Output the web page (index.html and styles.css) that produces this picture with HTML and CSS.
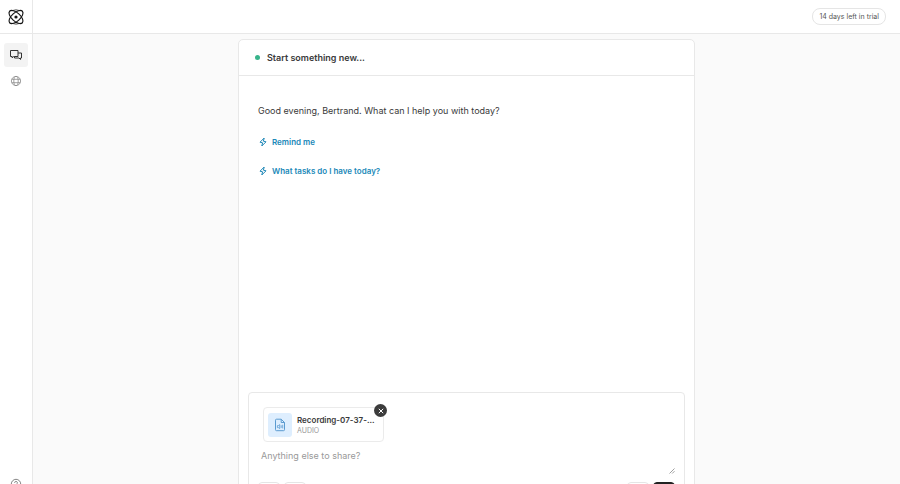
FILE: index.html
```html
<!DOCTYPE html>
<html lang="en">
<head>
  <meta charset="UTF-8">
  <title>Start something new...</title>
  <meta name="viewport" content="width=device-width, initial-scale=1">
  <link rel="stylesheet" href="styles.css">
</head>
<body>
  <div class="app">
    <nav class="sidebar" aria-label="Main">
      <a class="logo" href="#" aria-label="Home">
        <svg viewBox="0 0 18 18" width="18" height="18" fill="none" stroke="#161616" stroke-width="1.2">
          <ellipse cx="9" cy="9" rx="8.600" ry="4.200" transform="rotate(42 9 9)"/>
          <ellipse cx="9" cy="9" rx="8.600" ry="4.200" transform="rotate(-42 9 9)"/>
          <path d="M4.500 2.800Q9 .8 13.500 2.800M4.500 15.200q4.500 2 9 0" stroke-width=".7"/>
          <circle cx="9" cy="9" r="1.600" fill="#161616" stroke="none"/>
        </svg>
      </a>
      <div class="nav-links">
        <a class="nav-item active" href="#" aria-label="Chats">
          <svg viewBox="0 0 14 12" width="14" height="12" fill="none" stroke="#333" stroke-width="1">
            <path d="M5.500 7.500H4.600L3.200 9V7.500H1.500v-6h7.500v2.500"/>
            <path d="M9 4h3.500v5h-1v1.500L10 9H5.500V7.500H9z"/>
          </svg>
        </a>
        <a class="nav-item" href="#" aria-label="Explore">
          <svg viewBox="0 0 12 12" width="12" height="12" fill="none" stroke="#8a8a8a" stroke-width=".8">
            <circle cx="6" cy="6" r="4.600"/>
            <ellipse cx="6" cy="6" rx="2.200" ry="4.600"/>
            <path d="M1.800 4.300h8.400M1.800 7.700h8.400"/>
          </svg>
        </a>
      </div>
      <a class="nav-item help" href="#" aria-label="Help">
        <svg viewBox="0 0 12 12" width="12" height="12" fill="none" stroke="#777" stroke-width=".9">
          <circle cx="6" cy="6" r="4.700"/>
          <path d="M4.600 4.800a1.400 1.400 0 1 1 2 1.300q-.6.300-.6.900M6 8.200v.7"/>
        </svg>
      </a>
    </nav>

    <div class="page">
      <header class="topbar">
        <a class="trial" href="#">14 days left in trial</a>
      </header>

      <main class="content">
        <section class="chat">
          <div class="chat-header">
            <span class="status"></span>
            <h1>Start something new...</h1>
          </div>

          <div class="messages">
            <p>Good evening, Bertrand. What can I help you with today?</p>
            <button class="suggestion" type="button">
              <svg viewBox="0 0 10 10" width="10" height="10" fill="none" stroke="currentColor" stroke-width="1" stroke-linejoin="round">
                <path d="M6.200 1 2 5.200l2.600.6L3.800 9 8 4.800l-2.600-.6z"/>
              </svg>
              Remind me
            </button>
            <button class="suggestion" type="button">
              <svg viewBox="0 0 10 10" width="10" height="10" fill="none" stroke="currentColor" stroke-width="1" stroke-linejoin="round">
                <path d="M6.200 1 2 5.200l2.600.6L3.800 9 8 4.800l-2.600-.6z"/>
              </svg>
              What tasks do I have today?
            </button>
          </div>

          <form class="composer">
            <div class="file">
              <span class="file-icon">
                <svg viewBox="0 0 12 14" width="12" height="14" fill="none" stroke="#5b9bd0" stroke-width="1" stroke-linejoin="round">
                  <path d="M2.500 1.200h4.700l3.300 3.300v7.200q0 1-1 1h-7q-1 0-1-1V2.200q0-1 1-1zM7.200 1.200v3.300h3.300"/>
                  <path d="M3.400 7.600v2h1l1.300 1V6.600l-1.300 1zM7.200 7.300v2.600M8.700 6.800v3.600" stroke-width=".8"/>
                </svg>
              </span>
              <span class="file-text">
                <span class="file-name">Recording-07-37-...</span>
                <span class="file-type">AUDIO</span>
              </span>
              <button class="remove" type="button" aria-label="Remove file">
                <svg viewBox="0 0 6 6" width="6" height="6" stroke="#fff" stroke-width="1">
                  <path d="M.8.800l4.400 4.400M5.200.800.8 5.200"/>
                </svg>
              </button>
            </div>
            <div class="input">
              <textarea aria-label="Message" placeholder="Anything else to share?"></textarea>
              <svg class="grip" viewBox="0 0 6 6" width="6" height="6" stroke="#777" stroke-width=".7">
                <path d="M.5 5.500l5-5M3.200 5.500l2.300-2.300"/>
              </svg>
            </div>
            <div class="actions">
              <button type="button" aria-label="Attach"></button>
              <button type="button" aria-label="Prompts"></button>
              <button class="right" type="button" aria-label="Record"></button>
              <button class="send" type="submit" aria-label="Send"></button>
            </div>
          </form>
        </section>
      </main>
    </div>
  </div>
</body>
</html>
```

FILE: styles.css
```css
* {
  box-sizing: border-box;
}
body {
  margin: 0;
  height: 100vh;
  overflow: hidden;
  font-family: Inter, "Liberation Sans", sans-serif;
  font-size: 9px;
  color: #3a3a3a;
  background: #fafafa;
}
button, textarea {
  font: inherit;
}
svg {
  display: block;
  flex: none;
}
a {
  color: inherit;
  text-decoration: none;
}

/* the shell runs a little below the fold */
.app {
  display: flex;
  height: calc(100vh + 32px);
}
.sidebar {
  display: flex;
  flex-direction: column;
  align-items: center;
  width: 33px;
  background: #fff;
  border-right: 1px solid #e8e8e8;
}
.logo {
  display: flex;
  align-items: center;
  justify-content: center;
  width: 100%;
  height: 34px;
  border-bottom: 1px solid #e8e8e8;
}
.nav-links {
  display: flex;
  flex-direction: column;
  gap: 2px;
  margin-top: 9px;
}
.nav-item {
  display: flex;
  align-items: center;
  justify-content: center;
  width: 24px;
  height: 24px;
  border-radius: 3px;
}
.nav-item.active {
  background: #f3f3f3;
}
.help {
  margin-top: auto;
  margin-bottom: 20px;
}

.page {
  flex: 1;
  display: flex;
  flex-direction: column;
  min-width: 0;
}
.topbar {
  display: flex;
  align-items: center;
  justify-content: flex-end;
  height: 34px;
  padding: 0 14px;
  background: #fff;
  border-bottom: 1px solid #e8e8e8;
}
.trial {
  padding: 0 6px;
  border: 1px solid #e5e5e5;
  border-radius: 8px;
  font-size: 7px;
  line-height: 15px;
  color: #555;
}
.content {
  flex: 1;
  display: flex;
  justify-content: center;
  padding-top: 5px;
}
.chat {
  display: flex;
  flex-direction: column;
  width: 100%;
  max-width: 457px;
  background: #fff;
  border: 1px solid #e8e8e8;
  border-radius: 5px;
}
.chat-header {
  display: flex;
  align-items: center;
  gap: 7px;
  height: 36px;
  padding: 0 16px;
  border-bottom: 1px solid #e8e8e8;
}
.status {
  width: 5px;
  height: 5px;
  border-radius: 50%;
  background: #38b48b;
}
h1 {
  margin: 0;
  font-size: 9px;
  font-weight: 600;
}
.messages {
  flex: 1;
  display: flex;
  flex-direction: column;
  align-items: flex-start;
  gap: 17px;
  padding: 27px 19px;
}
.messages p {
  margin: 0;
  line-height: 16px;
}
.suggestion {
  display: flex;
  align-items: center;
  gap: 4px;
  padding: 0;
  border: 0;
  background: none;
  color: #2088b8;
  font-size: 8px;
  font-weight: 600;
  line-height: 12px;
  cursor: pointer;
}

.composer {
  margin: 0 9px 8px;
  padding: 14px 9px 8px;
  border: 1px solid #e8e8e8;
  border-radius: 4px;
}
.file {
  position: relative;
  display: flex;
  align-items: center;
  gap: 5px;
  width: 121px;
  height: 35px;
  margin-left: 5px;
  padding: 0 4px;
  border: 1px solid #ebebeb;
  border-radius: 4px;
}
.file-icon {
  display: flex;
  align-items: center;
  justify-content: center;
  flex: none;
  width: 24px;
  height: 24px;
  border-radius: 3px;
  background: #deeefe;
}
.file-text {
  display: flex;
  flex-direction: column;
  white-space: nowrap;
}
.file-name {
  font-size: 8px;
  font-weight: 600;
  line-height: 11px;
}
.file-type {
  font-size: 7px;
  line-height: 9px;
  color: #999;
}
.remove {
  position: absolute;
  top: -4px;
  right: -4px;
  display: flex;
  align-items: center;
  justify-content: center;
  width: 13px;
  height: 13px;
  padding: 0;
  border: 0;
  border-radius: 50%;
  background: #3c3c3c;
  cursor: pointer;
}
.input {
  position: relative;
  margin-top: 6px;
}
textarea {
  display: block;
  width: 100%;
  height: 27px;
  padding: 0 3px;
  border: 0;
  outline: 0;
  resize: none;
  background: none;
  line-height: 16px;
}
textarea::placeholder {
  color: #999;
}
.grip {
  position: absolute;
  right: 0;
  bottom: 1px;
}
.actions {
  display: flex;
  gap: 4px;
  margin-top: 7px;
}
.actions button {
  width: 22px;
  height: 16px;
  border: 1px solid #e5e5e5;
  border-radius: 4px;
  background: #fff;
}
.actions .right {
  margin-left: auto;
}
.actions .send {
  border-color: #222;
  background: #222;
}
```
